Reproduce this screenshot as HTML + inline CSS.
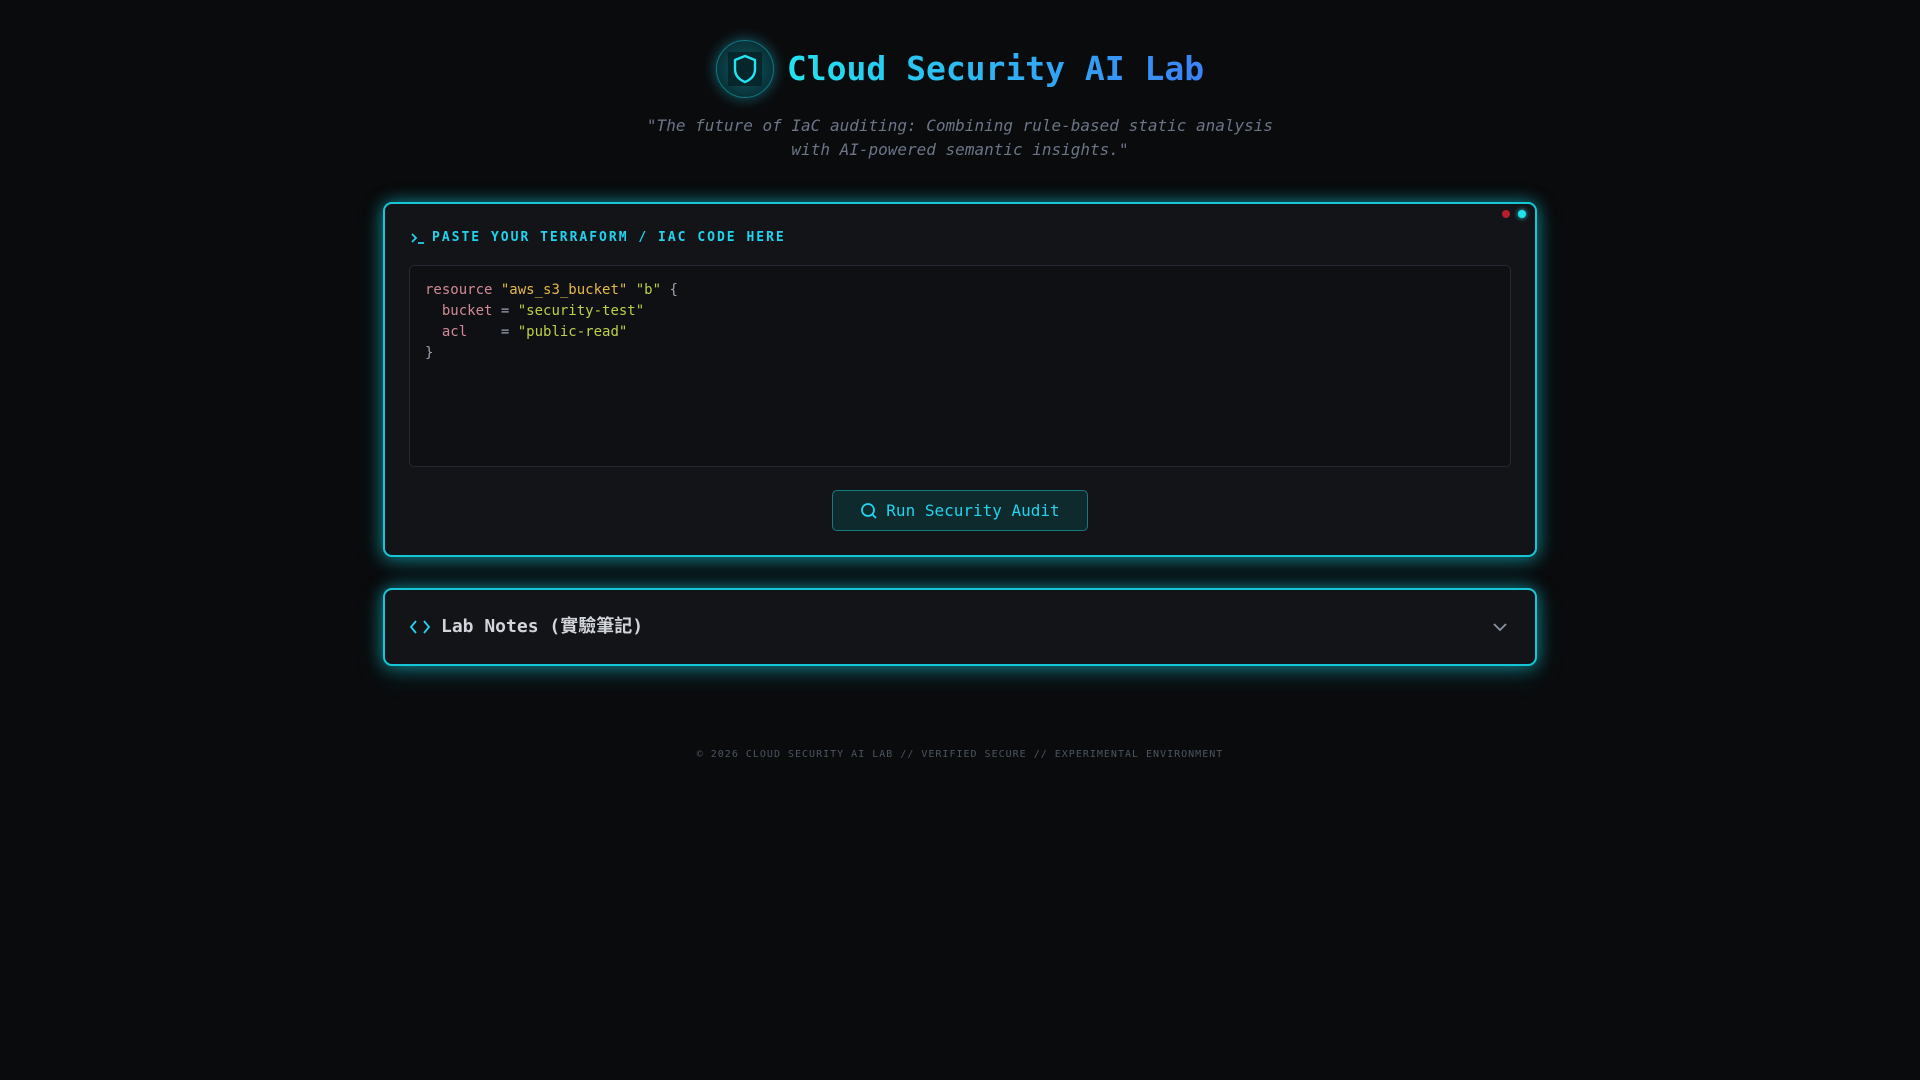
<!DOCTYPE html>
<html><head><meta charset="utf-8"><style>
*{box-sizing:border-box;margin:0;padding:0}
html,body{width:1920px;height:1080px;background:#0a0b0d;overflow:hidden;font-family:"DejaVu Sans Mono","Liberation Mono","Noto Sans CJK TC",monospace}
.hdr{position:absolute;top:40px;left:0;width:1920px;display:flex;justify-content:center;align-items:center;gap:13px}
.logo{width:58px;height:58px;border-radius:50%;background:radial-gradient(circle,#0d5a63 0%,#093238 70%);border:1px solid #0e7a85;box-shadow:0 0 14px rgba(34,211,238,.45);display:flex;align-items:center;justify-content:center}
.logo .sq{width:34px;height:34px;background:#07262b;display:flex;align-items:center;justify-content:center}
h1{font-size:33px;font-weight:bold;background:linear-gradient(90deg,#22e3f0,#3b82f6);-webkit-background-clip:text;background-clip:text;color:transparent;line-height:58px}
.tag{position:absolute;top:114px;width:1920px;text-align:center;font-style:italic;font-size:16px;line-height:24px;color:#6b7587}
.card{position:absolute;left:383px;width:1154px;background:#131418;border:2px solid #14c6d6;border-radius:9px;box-shadow:0 0 16px rgba(20,200,215,.55),0 6px 26px rgba(20,200,215,.25)}
.c1{top:202px;height:355px}
.c2{top:588px;height:78px}
.lbl{position:absolute;left:25px;top:26px;font-size:13px;font-weight:bold;letter-spacing:2px;color:#22d3ee;display:flex;align-items:center;gap:6px}
.ta{position:absolute;left:24px;top:61px;width:1102px;height:202px;border:1px solid #232833;border-radius:5px;background:#0f1013;padding:14px 15px;font-size:14px;line-height:21px;color:#9ca3af;white-space:pre}
.k{color:#d08a96}.s{color:#e5b94a}.g{color:#bccf4a}
.btn{position:absolute;left:447px;top:286px;width:256px;height:41px;border:1px solid #127a80;border-radius:5px;background:#0e2a2d;color:#22d3ee;font-size:16px;display:flex;align-items:center;justify-content:center;gap:8px}
.dot{position:absolute;top:6px;width:8px;height:8px;border-radius:50%}
.c2 .t{position:absolute;left:56px;top:0;line-height:74px;font-size:18px;font-weight:bold;color:#d1d5db}
.foot{position:absolute;top:749px;width:1920px;text-align:center;font-size:10px;letter-spacing:1px;color:#4b5563}
</style></head><body>
<div class="hdr"><div class="logo"><div class="sq"><svg width="26" height="30" viewBox="0 0 26 30"><path d="M13 2 L23 6 V15 C23 22 18 26 13 28 C8 26 3 22 3 15 V6 Z" fill="none" stroke="#22e3f0" stroke-width="2.4" stroke-linejoin="round"/></svg></div></div><h1>Cloud Security AI Lab</h1></div>
<div class="tag">"The future of IaC auditing: Combining rule-based static analysis<br>with AI-powered semantic insights."</div>
<div class="card c1">
<div class="dot" style="left:1117px;background:#b91c2a"></div>
<div class="dot" style="left:1133px;background:#22e3f0;box-shadow:0 0 5px #22e3f0"></div>
<div class="lbl"><svg width="16" height="14" viewBox="0 0 16 14"><path d="M2 3 L6 7 L2 11 M8 12 H14" fill="none" stroke="#22d3ee" stroke-width="1.8"/></svg>PASTE YOUR TERRAFORM / IAC CODE HERE</div>
<div class="ta"><span class="k">resource</span> <span class="s">"aws_s3_bucket"</span> <span class="g">"b"</span> {
  <span class="k">bucket</span> = <span class="g">"security-test"</span>
  <span class="k">acl</span>    = <span class="g">"public-read"</span>
}</div>
<div class="btn"><svg width="18" height="18" viewBox="0 0 18 18"><circle cx="8" cy="8" r="6" fill="none" stroke="#22d3ee" stroke-width="1.8"/><path d="M12.5 12.5 L16 16" stroke="#22d3ee" stroke-width="1.8"/></svg>Run Security Audit</div>
</div>
<div class="card c2">
<svg style="position:absolute;left:24px;top:28px" width="22" height="18" viewBox="0 0 22 18"><path d="M7 3 L2 9 L7 15 M15 3 L20 9 L15 15" fill="none" stroke="#22d3ee" stroke-width="1.8"/></svg>
<div class="t">Lab Notes (實驗筆記)</div>
<svg style="position:absolute;left:1107px;top:31px" width="16" height="12" viewBox="0 0 16 12"><path d="M2 3 L8 9 L14 3" fill="none" stroke="#8b93a1" stroke-width="1.8"/></svg>
</div>
<div class="foot">© 2026 CLOUD SECURITY AI LAB // VERIFIED SECURE // EXPERIMENTAL ENVIRONMENT</div>
</body></html>
